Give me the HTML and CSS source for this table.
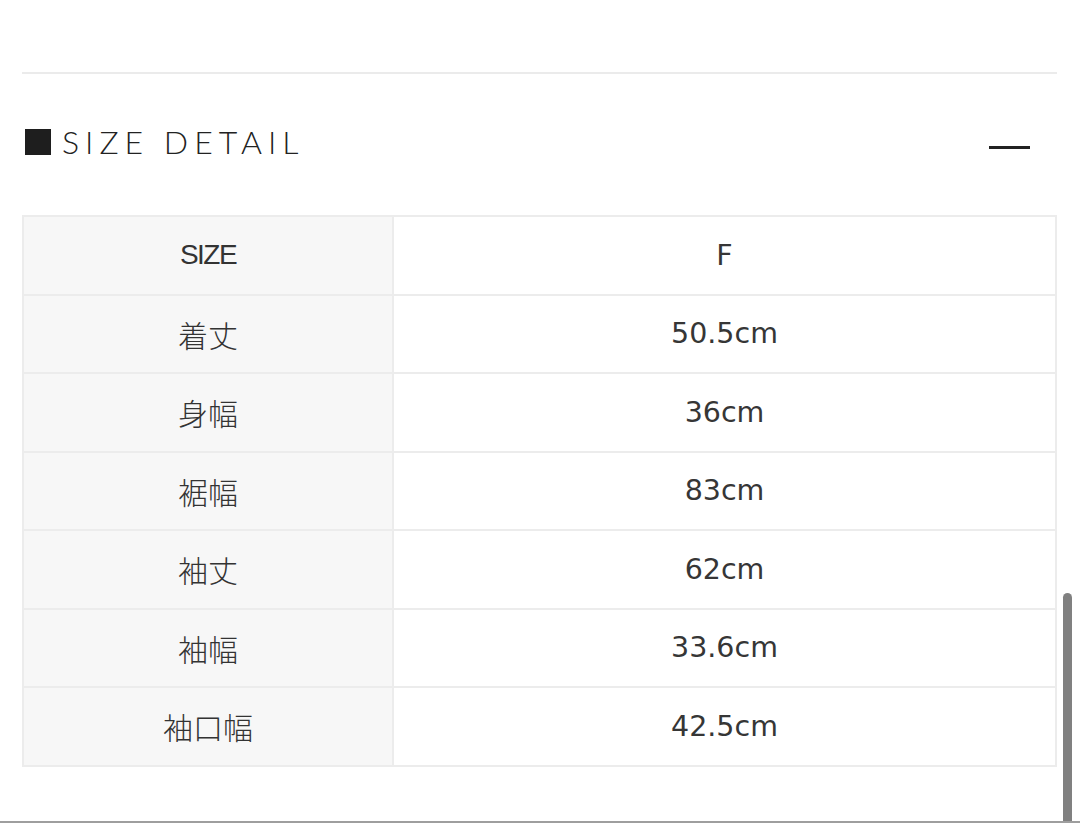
FILE: index.html
```html
<!DOCTYPE html>
<html lang="ja">
<head>
<meta charset="utf-8">
<title>SIZE DETAIL</title>
<link rel="stylesheet" href="styles.css">
</head>
<body>
<div class="page">
  <div class="rule"></div>
  <div class="head">
    <h2 class="title"><span class="sq"></span><span class="title-text">SIZE DETAIL</span></h2>
    <span class="dash"></span>
  </div>
  <table class="size-table">
    <tr><th class="label latin">SIZE</th><td class="val">F</td></tr>
    <tr><th class="label">着丈</th><td class="val">50.5cm</td></tr>
    <tr><th class="label">身幅</th><td class="val">36cm</td></tr>
    <tr><th class="label">裾幅</th><td class="val">83cm</td></tr>
    <tr><th class="label">袖丈</th><td class="val">62cm</td></tr>
    <tr><th class="label">袖幅</th><td class="val">33.6cm</td></tr>
    <tr><th class="label">袖口幅</th><td class="val">42.5cm</td></tr>
  </table>
</div>
<div class="scrollbar"></div>
<div class="bottom-line"></div>
</body>
</html>
```
FILE: styles.css
```css
html, body {
  margin: 0;
  padding: 0;
  background: #ffffff;
  height: 823px;
  overflow: hidden;
}
body {
  font-family: "Liberation Sans", "Noto Sans CJK JP", sans-serif;
  color: #333333;
  position: relative;
}
.page {
  padding: 0 23px 0 22px;
}
.rule {
  margin-top: 72px;
  height: 2px;
  background: #ebebeb;
}
.head {
  height: 141px;
  display: flex;
  align-items: center;
  justify-content: space-between;
}
.title {
  margin: 0 0 6px 3px;
  display: flex;
  align-items: center;
  font-weight: 300;
  font-family: "Lato", "Liberation Sans", sans-serif;
  font-size: 32px;
  letter-spacing: 6px;
  color: #222222;
}
.sq {
  width: 26px;
  height: 26px;
  background: #1e1e1e;
  margin-right: 11px;
}
.dash {
  width: 41px;
  height: 3px;
  background: #222222;
  margin-right: 27px;
  margin-top: 6px;
}
.size-table {
  width: 100%;
  border-collapse: separate;
  border-spacing: 0;
  border-top: 2px solid #ececec;
  border-left: 2px solid #ececec;
}
.size-table th,
.size-table td {
  height: 78.5px;
  box-sizing: border-box;
  padding: 0;
  border-right: 2px solid #ececec;
  border-bottom: 2px solid #ececec;
  text-align: center;
  vertical-align: middle;
  font-weight: 400;
}
.label {
  width: 370px;
  background: #f7f7f7;
  font-family: "Noto Sans CJK JP", sans-serif;
  font-size: 30px;
  color: #333333;
}
.size-table .label {
  font-weight: 300;
}
.size-table .label.latin {
  font-family: "Liberation Sans", sans-serif;
  font-size: 28px;
  font-weight: 400;
  letter-spacing: -1.5px;
}
.val {
  background: #ffffff;
  font-family: "DejaVu Sans", "Liberation Sans", sans-serif;
  font-size: 28.5px;
  color: #363636;
}
.scrollbar {
  position: absolute;
  left: 1063px;
  top: 593px;
  width: 9px;
  height: 240px;
  border-radius: 5px;
  background: #808080;
}
.bottom-line {
  position: absolute;
  left: 0;
  right: 0;
  top: 821px;
  height: 2px;
  background: #9e9e9e;
}
```
